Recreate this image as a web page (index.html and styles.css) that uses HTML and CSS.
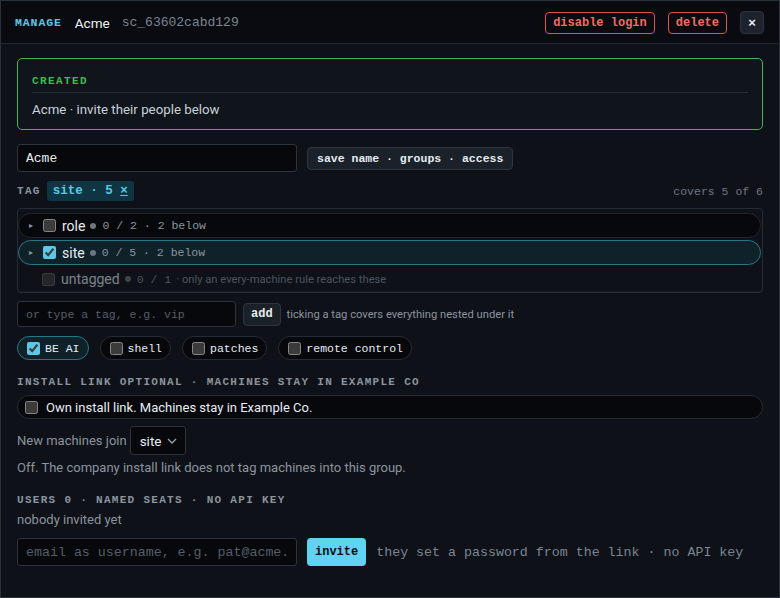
FILE: index.html
```html
<!DOCTYPE html>
<html lang="en">
<head>
    <meta charset="UTF-8">
    <meta name="viewport" content="width=device-width, initial-scale=1.0">
    <title>Manage Acme</title>
    <link rel="stylesheet" href="styles.css">
</head>
<body>
    <div class="dialog">
        <header class="head">
            <span class="head-kicker">MANAGE</span>
            <span class="head-name">Acme</span>
            <span class="head-id">sc_63602cabd129</span>
            <span class="spacer"></span>
            <button class="btn-danger">disable login</button>
            <button class="btn-danger">delete</button>
            <button class="btn-close">&times;</button>
        </header>

        <div class="content">
            <section class="notice">
                <div class="notice-title">CREATED</div>
                <div class="notice-body">Acme &middot; invite their people below</div>
            </section>

            <div class="line name-row">
                <input class="field field-name" type="text" value="Acme">
                <button class="btn">save name &middot; groups &middot; access</button>
            </div>

            <div class="tag-head">
                <span class="caps">TAG</span>
                <span class="tag-chip">site &middot; 5 <u>&times;</u></span>
                <span class="spacer"></span>
                <span class="muted-mono">covers 5 of 6</span>
            </div>

            <div class="tree">
                <label class="tree-row">
                    <span class="caret">&#9656;</span>
                    <input type="checkbox">
                    <span class="tree-name">role</span>
                    <span class="dot"></span>
                    <span class="tree-stat">0 / 2 &middot; 2 below</span>
                </label>
                <label class="tree-row on">
                    <span class="caret">&#9656;</span>
                    <input type="checkbox" checked>
                    <span class="tree-name">site</span>
                    <span class="dot"></span>
                    <span class="tree-stat">0 / 5 &middot; 2 below</span>
                </label>
                <label class="tree-row dim">
                    <span class="caret"></span>
                    <input type="checkbox" disabled>
                    <span class="tree-name">untagged</span>
                    <span class="dot"></span>
                    <span class="tree-stat">0 / 1</span>
                    <span class="tree-note">&middot; only an every-machine rule reaches these</span>
                </label>
            </div>

            <div class="line add-row">
                <input class="field field-tag" type="text" placeholder="or type a tag, e.g. vip">
                <button class="btn btn-add">add</button>
                <span class="hint">ticking a tag covers everything nested under it</span>
            </div>

            <div class="chips">
                <label class="chip on"><input type="checkbox" checked>BE AI</label>
                <label class="chip"><input type="checkbox">shell</label>
                <label class="chip"><input type="checkbox">patches</label>
                <label class="chip"><input type="checkbox">remote control</label>
            </div>

            <h3 class="caps section">INSTALL LINK OPTIONAL &middot; MACHINES STAY IN EXAMPLE CO</h3>
            <label class="wide-pill"><input type="checkbox">Own install link. Machines stay in Example Co.</label>

            <div class="join">
                <span>New machines join</span>
                <span class="select">site
                    <svg width="10" height="6" viewBox="0 0 10 6"><path d="M1 1l4 4 4-4" fill="none" stroke="#9aa4af" stroke-width="1.3"/></svg>
                </span>
            </div>
            <p class="muted off-note">Off. The company install link does not tag machines into this group.</p>

            <h3 class="caps section users">USERS 0 &middot; NAMED SEATS &middot; NO API KEY</h3>
            <p class="muted nobody">nobody invited yet</p>

            <div class="line invite-row">
                <input class="field field-email" type="text" placeholder="email as username, e.g. pat@acme.com">
                <button class="btn-invite">invite</button>
                <span class="muted-mono invite-hint">they set a password from the link &middot; no API key</span>
            </div>
        </div>
    </div>
</body>
</html>
```

FILE: styles.css
```css
* {
    box-sizing: border-box;
}
body {
    margin: 0;
    background-color: #0d1016;
    font-family: Roboto, "Noto Sans", sans-serif;
    font-size: 13px;
    color: #e6edf3;
    color-scheme: dark;
}
input[type="checkbox"] {
    width: 13px;
    height: 13px;
    margin: 0;
    accent-color: #5cc8e6;
    flex: none;
}
.dialog {
    width: 780px;
    height: 598px;
    border: 1px solid #2b313a;
    background-color: #0e1118;
    overflow: hidden;
}
.head {
    display: flex;
    align-items: center;
    height: 43px;
    padding: 1px 15px 0 14px;
    background-color: #090b10;
    border-bottom: 1px solid #222832;
}
.head-kicker {
    font-family: "Liberation Mono", monospace;
    font-weight: bold;
    font-size: 11.5px;
    letter-spacing: 0.9px;
    color: #5cc8e6;
}
.head-name {
    margin-left: 13px;
    font-size: 13.5px;
    color: #f0f3f6;
}
.head-id {
    margin-left: 12px;
    font-family: "Liberation Mono", monospace;
    font-size: 13px;
    color: #7d8590;
}
.spacer {
    flex: 1;
}
.btn-danger {
    height: 22px;
    margin-left: 13px;
    padding: 0 7px;
    background: transparent;
    border: 1px solid #e0524c;
    border-radius: 4px;
    color: #f36b63;
    font-family: "Liberation Mono", monospace;
    font-weight: bold;
    font-size: 12px;
}
.btn-close {
    width: 24px;
    height: 23px;
    margin-left: 13px;
    padding: 0;
    background-color: #1d232c;
    border: 1px solid #2d343e;
    border-radius: 4px;
    color: #e6edf3;
    font-weight: bold;
    font-size: 13px;
}
.content {
    padding: 14px 16px 0 16px;
}
.notice {
    border: 1px solid #3fb45c;
    border-radius: 5px;
    padding: 15px 14px 10px 14px;
    background-color: #10141b;
}
.notice-title {
    font-family: "Liberation Mono", monospace;
    font-weight: bold;
    font-size: 11px;
    letter-spacing: 1.4px;
    color: #3fb950;
    line-height: 14px;
    padding-bottom: 4px;
    border-bottom: 1px solid #262c35;
}
.notice-body {
    margin-top: 8px;
    line-height: 18px;
    font-size: 13.3px;
    color: #c9d1d9;
}
.line {
    display: flex;
    align-items: center;
}
.field {
    height: 28px;
    padding: 0 8px;
    background-color: #06080c;
    border: 1px solid #2d333c;
    border-radius: 3px;
    color: #e6edf3;
    font-family: "Liberation Mono", monospace;
    font-size: 13px;
    outline: none;
}
.field::placeholder {
    color: #565e69;
}
.name-row {
    margin-top: 14px;
}
.field-name {
    width: 280px;
}
.btn {
    height: 23px;
    margin-left: 10px;
    padding: 0 9px;
    background-color: #1b2129;
    border: 1px solid #2e353f;
    border-radius: 4px;
    color: #e6edf3;
    font-family: "Liberation Mono", monospace;
    font-weight: bold;
    font-size: 11.5px;
}
.tag-head {
    display: flex;
    align-items: center;
    margin-top: 9px;
    height: 20px;
}
.caps {
    font-family: "Liberation Mono", monospace;
    font-weight: bold;
    font-size: 11px;
    letter-spacing: 1.3px;
    color: #8b949e;
}
.tag-chip {
    margin-left: 6px;
    height: 20px;
    line-height: 20px;
    padding: 0 6px;
    background-color: #0f3542;
    border-radius: 3px;
    font-family: "Liberation Mono", monospace;
    font-weight: bold;
    font-size: 12.5px;
    color: #5cc8e6;
}
.muted-mono {
    font-family: "Liberation Mono", monospace;
    font-size: 11.5px;
    color: #6e7681;
}
.tree {
    margin-top: 7px;
    height: 85px;
    border: 1px solid #262c35;
    border-radius: 4px;
    padding: 4px 1px 0 0;
    display: flex;
    flex-direction: column;
    gap: 2px;
}
.tree-row {
    display: flex;
    align-items: center;
    height: 25px;
    padding-left: 10px;
    border: 1px solid #1f252d;
    border-radius: 13px;
    background-color: #06080c;
}
.tree-row.on {
    background-color: #0f2229;
    border-color: #2b7686;
}
.tree-row.dim {
    background: transparent;
    border: none;
    border-bottom: 1px solid #1b2028;
    border-radius: 0;
    opacity: 0.5;
}
.caret {
    width: 8px;
    font-size: 8px;
    color: #8b949e;
    margin-right: 6px;
}
.tree-name {
    margin-left: 6px;
    font-size: 14px;
    color: #e6edf3;
}
.dot {
    width: 6px;
    height: 6px;
    margin: 0 6px 0 5px;
    border-radius: 50%;
    background-color: #6e7681;
}
.tree-stat {
    font-family: "Liberation Mono", monospace;
    font-size: 11.5px;
    color: #8b949e;
}
.tree-note {
    margin-left: 5px;
    font-size: 11.2px;
    color: #8b949e;
}
.add-row {
    margin-top: 8px;
}
.field-tag {
    width: 219px;
    height: 26px;
    font-size: 11.5px;
}
.btn-add {
    margin-left: 7px;
    height: 23px;
    padding: 0 7px;
    font-size: 12px;
}
.hint {
    margin-left: 6px;
    font-size: 11.2px;
    color: #8b949e;
}
.chips {
    display: flex;
    gap: 11px;
    margin-top: 9px;
}
.chip {
    display: flex;
    align-items: center;
    gap: 5px;
    height: 24px;
    padding: 0 8px 0 9px;
    border: 1px solid #262c35;
    border-radius: 12px;
    background-color: #06080c;
    font-family: "Liberation Mono", monospace;
    font-size: 11.5px;
    color: #e6edf3;
}
.chip.on {
    background-color: #0f2229;
    border-color: #2b7686;
}
.section {
    margin: 15px 0 0 0;
    line-height: 14px;
}
.wide-pill {
    display: flex;
    align-items: center;
    gap: 8px;
    margin-top: 6px;
    height: 24px;
    padding: 0 7px;
    border: 1px solid #262c35;
    border-radius: 12px;
    background-color: #06080c;
    color: #e6edf3;
    font-size: 13px;
}
.join {
    display: flex;
    align-items: center;
    margin-top: 7px;
    color: #8b949e;
    font-size: 13px;
}
.select {
    display: flex;
    align-items: center;
    gap: 6px;
    height: 29px;
    margin-left: 3px;
    padding: 0 8px 0 9px;
    background-color: #06080c;
    border: 1px solid #2d333c;
    border-radius: 3px;
    color: #e6edf3;
    font-size: 13.5px;
}
.muted {
    color: #8b949e;
}
.off-note {
    margin: 4px 0 0 0;
    line-height: 18px;
    font-size: 13px;
}
.users {
    margin-top: 16px;
}
.nobody {
    margin: 5px 0 0 0;
    line-height: 16px;
    font-size: 13px;
}
.invite-row {
    margin-top: 10px;
}
.field-email {
    width: 280px;
    font-size: 13.3px;
}
.btn-invite {
    height: 28px;
    margin-left: 10px;
    padding: 0 8px;
    background-color: #5fd3f1;
    border: none;
    border-radius: 4px;
    color: #0a0d12;
    font-family: "Liberation Mono", monospace;
    font-weight: bold;
    font-size: 12px;
}
.invite-hint {
    margin-left: 10px;
    font-size: 13.3px;
    color: #7d8590;
}
```
